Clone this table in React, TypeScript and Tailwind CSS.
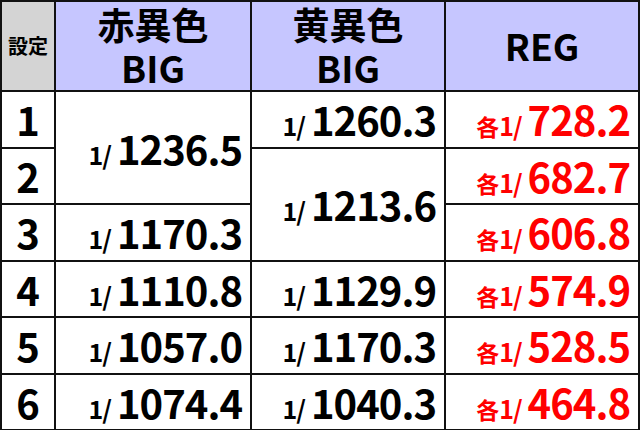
const font = { fontFamily: '"Noto Sans CJK JP", "Noto Sans", sans-serif' };

type Cell = { value: string; span?: number; red?: boolean };

const rows: { no: string; cells: (Cell | null)[] }[] = [
  { no: "1", cells: [{ value: "1236.5", span: 2 }, { value: "1260.3" }, { value: "728.2", red: true }] },
  { no: "2", cells: [null, { value: "1213.6", span: 2 }, { value: "682.7", red: true }] },
  { no: "3", cells: [{ value: "1170.3" }, null, { value: "606.8", red: true }] },
  { no: "4", cells: [{ value: "1110.8" }, { value: "1129.9" }, { value: "574.9", red: true }] },
  { no: "5", cells: [{ value: "1057.0" }, { value: "1170.3" }, { value: "528.5", red: true }] },
  { no: "6", cells: [{ value: "1074.4" }, { value: "1040.3" }, { value: "464.8", red: true }] },
];

function Value({ cell }: { cell: Cell }) {
  return (
    <td
      rowSpan={cell.span}
      className={`border-2 border-[#111] bg-white pr-[8px] text-right align-middle font-bold leading-none whitespace-nowrap ${cell.red ? "text-[#ff0000]" : "text-black"}`}
    >
      {cell.red && <span className="text-[23px]">各</span>}
      <span className="mr-[6px] text-[25px] tracking-[-1px]">1/</span>
      <span className="text-[40px] tracking-[-1px]">{cell.value}</span>
    </td>
  );
}

export default function App() {
  return (
    <div className="w-[640px] h-[430px] bg-white overflow-hidden" style={font}>
      <table className="w-[640px] table-fixed border-collapse border-2 border-[#111]">
        <colgroup>
          <col className="w-[54px]" />
          <col className="w-[196px]" />
          <col className="w-[194px]" />
          <col />
        </colgroup>
        <thead>
          <tr className="h-[90px]">
            <th className="border-2 border-[#111] bg-[#d4d4d4] text-[20px] font-bold text-black">設定</th>
            <th className="border-2 border-[#111] bg-[#c6c6ff] text-[37px] font-bold leading-[43px] text-black">
              赤異色
              <br />
              BIG
            </th>
            <th className="border-2 border-[#111] bg-[#c6c6ff] text-[37px] font-bold leading-[43px] text-black">
              黄異色
              <br />
              BIG
            </th>
            <th className="border-2 border-[#111] bg-[#c6c6ff] text-[37px] font-bold text-black">REG</th>
          </tr>
        </thead>
        <tbody>
          {rows.map((r) => (
            <tr key={r.no} className="h-[56.5px]">
              <td className="border-2 border-[#111] bg-white text-center text-[40px] font-bold leading-none text-black">
                {r.no}
              </td>
              {r.cells.map((c, i) => (c ? <Value key={i} cell={c} /> : null))}
            </tr>
          ))}
        </tbody>
      </table>
    </div>
  );
}
